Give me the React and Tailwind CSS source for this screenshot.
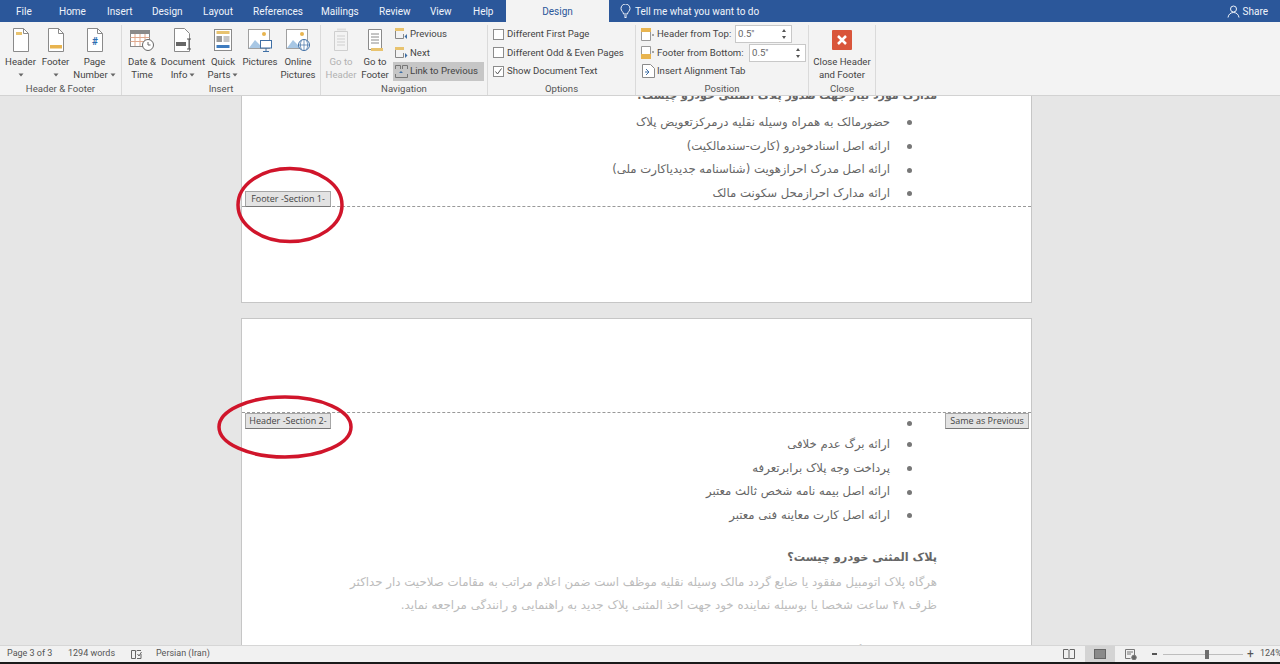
const tabs = [
  ['File', 'ml-[16px] w-[43px]'],
  ['Home', 'w-[48px]'],
  ['Insert', 'w-[45px]'],
  ['Design', 'w-[51px]'],
  ['Layout', 'w-[50px]'],
  ['References', 'w-[68px]'],
  ['Mailings', 'w-[58px]'],
  ['Review', 'w-[51px]'],
  ['View', 'w-[43px]'],
  ['Help', 'w-[33px]'],
];

const faPage1 = [
  'حضورمالک به همراه وسیله نقلیه درمرکزتعویض پلاک',
  'ارائه اصل اسنادخودرو (کارت-سندمالکیت)',
  'ارائه اصل مدرک احرازهویت (شناسنامه جدیدیاکارت ملی)',
  'ارائه مدارک احرازمحل سکونت مالک',
];

const faPage2 = [
  'ارائه برگ عدم خلافی',
  'پرداخت وجه پلاک برابرتعرفه',
  'ارائه اصل بیمه نامه شخص ثالث معتبر',
  'ارائه اصل کارت معاینه فنی معتبر',
];

function Sheet({ bar, children }) {
  return (
    <svg width="20" height="26" viewBox="0 0 20 26" fill="none">
      <path d="M2.5 1.5h10l5 5v18h-15z" fill="#fff" stroke="#8a8a8a" />
      <path d="M12.5 1.5v5h5" stroke="#8a8a8a" />
      {bar === 'top' && <rect x="5" y="5" width="6" height="3" fill="#e8c36f" />}
      {bar === 'bottom' && <rect x="4" y="18" width="12" height="3.5" fill="#e8b44f" />}
      {children}
    </svg>
  );
}

function Chevron() {
  return (
    <svg width="6" height="4" viewBox="0 0 6 4" className="inline-block align-middle">
      <path d="M0.5 0.5h5L3 3.5z" fill="#666" />
    </svg>
  );
}

function BigButton({ width, label, sub, chevron, dim, icon }) {
  return (
    <div className={`flex flex-col items-center ${width} ${dim ? 'text-[#b1b1b1]' : 'text-[#444]'}`}>
      <div className="h-[30px] shrink-0 flex items-center justify-center">{icon}</div>
      <div className="leading-[13px] whitespace-nowrap">{label}</div>
      <div className="leading-[13px] whitespace-nowrap">
        {sub}
        {chevron && <span className={sub ? 'ml-[2px]' : ''}><Chevron /></span>}
      </div>
    </div>
  );
}

function Group({ width, label, children, last }) {
  return (
    <div className={`flex flex-col shrink-0 h-full ${width} ${last ? '' : 'border-r border-[#dadada]'}`}>
      <div className="flex-1 flex min-h-0">{children}</div>
      <div className="h-[13px] leading-[13px] text-center text-[#555]">{label}</div>
    </div>
  );
}

function CheckRow({ checked, label }) {
  return (
    <div className="h-[18.5px] flex items-center gap-[3px] text-[#444] whitespace-nowrap">
      <span className="w-[11px] h-[11px] border border-[#8c8c8c] bg-white flex items-center justify-center">
        {checked && (
          <svg width="9" height="9" viewBox="0 0 9 9" fill="none">
            <path d="M1.5 4.5l2 2.5 4-5.5" stroke="#555" />
          </svg>
        )}
      </span>
      {label}
    </div>
  );
}

function Spinner({ width }) {
  return (
    <div className={`h-[18px] border border-[#c8c8c8] bg-white flex items-center justify-between pl-[2px] pr-[4px] text-[#666] ${width}`}>
      0.5"
      <svg width="6" height="12" viewBox="0 0 6 12">
        <path d="M3 1l2 3H1zM3 11L1 8h4z" fill="#555" />
      </svg>
    </div>
  );
}

function Tag({ className, children }) {
  return (
    <div className={`absolute h-[16px] bg-[#e3e3e3] border border-[#a6a6a6] border-b-[#777] text-[9px] leading-[14px] text-center text-[#444] whitespace-nowrap ${className}`}>
      {children}
    </div>
  );
}

function Bullets({ items, firstEmpty }) {
  return (
    <ul dir="rtl" className="pr-[119px] text-[#666] text-[11.7px]">
      {firstEmpty && (
        <li className="h-[20px] flex items-center"><span className="w-[5px] h-[5px] rounded-full bg-[#777]" /></li>
      )}
      {items.map((t) => (
        <li key={t} className="h-[23.7px] flex items-center gap-[17px] whitespace-nowrap">
          <span className="w-[5px] h-[5px] rounded-full bg-[#777] shrink-0" />
          {t}
        </li>
      ))}
    </ul>
  );
}

export default function App() {
  return (
    <div className="w-[1280px] h-[664px] overflow-hidden flex flex-col bg-[#e6e6e6] font-['Roboto','Noto_Sans',sans-serif] text-[10px]">
      {/* title tabs */}
      <div className="h-[22px] bg-[#2b579a] flex items-center text-[#f0f4fa] shrink-0">
        {tabs.map(([t, cls]) => (
          <div key={t} className={`whitespace-nowrap ${cls}`}>{t}</div>
        ))}
        <div className="mr-[11px] w-[103px] h-full bg-[#f3f3f3] text-[#2b579a] flex items-center justify-center">Design</div>
        <svg width="11" height="14" viewBox="0 0 11 14" fill="none" stroke="#f0f4fa">
          <path d="M3.5 10c0-2-2.5-3-2.500-5.500a4.500 4.500 0 019 0C10 7 7.500 8 7.500 10zM4 12h3M4.500 13.500h2" />
        </svg>
        <span className="ml-[4px]">Tell me what you want to do</span>
        <div className="ml-auto mr-[12px] flex items-center gap-[3px]">
          <svg width="13" height="13" viewBox="0 0 13 13" fill="none" stroke="#f0f4fa">
            <circle cx="6.500" cy="4" r="3" />
            <path d="M1 12.500c.5-3.500 3-5 5.500-5s5 1.500 5.500 5" />
          </svg>
          Share
        </div>
      </div>

      {/* ribbon */}
      <div className="h-[74px] bg-[#f3f3f3] border-b border-[#d2d2d2] flex pt-[3px] shrink-0 text-[9.6px]">
        <Group width="w-[122px]" label="Header & Footer">
          <div className="flex pl-[3px]">
            <BigButton width="w-[35px]" label="Header" chevron icon={<Sheet bar="top" />} />
            <BigButton width="w-[35px]" label="Footer" chevron icon={<Sheet bar="bottom" />} />
            <BigButton width="w-[43px]" label="Page" sub="Number" chevron icon={
              <Sheet><text x="10" y="18" textAnchor="middle" fontSize="10" fontWeight="700" fill="#2b6cb0">#</text></Sheet>
            } />
          </div>
        </Group>
        <Group width="w-[199px]" label="Insert">
          <div className="flex">
            <BigButton width="w-[40px]" label="Date &" sub="Time" icon={
              <svg width="26" height="25" viewBox="0 0 26 25" fill="none">
                <rect x="1.500" y="2.500" width="19" height="16" fill="#fff" stroke="#8a8a8a" />
                <rect x="1.500" y="2.500" width="19" height="3.500" fill="#8a8a8a" />
                <path d="M1.500 9.500h19M1.500 13.500h19M6 6v12M11 6v12M16 6v12" stroke="#e0a98e" />
                <circle cx="19" cy="17" r="5.500" fill="#fff" stroke="#666" />
                <path d="M19 14v3h2.500" stroke="#666" />
              </svg>
            } />
            <BigButton width="w-[42px]" label="Document" sub="Info" chevron icon={
              <svg width="22" height="26" viewBox="0 0 22 26" fill="none">
                <path d="M2.500 1.500h10l5 5v18h-15z" fill="#fff" stroke="#8a8a8a" />
                <rect x="4" y="15" width="10" height="4" fill="#666" />
                <path d="M15 12h4M17 12v10M15 22h4" stroke="#555" />
              </svg>
            } />
            <BigButton width="w-[38px]" label="Quick" sub="Parts" chevron icon={
              <svg width="20" height="24" viewBox="0 0 20 24" fill="none">
                <rect x="1.500" y="1.500" width="17" height="21" fill="#fff" stroke="#8a8a8a" />
                <rect x="3.500" y="3" width="13" height="3" fill="#e8c36f" />
                <rect x="3.500" y="8" width="5.500" height="6" fill="#9a9a9a" />
                <path d="M10.500 9h6M10.500 11h6M10.500 13h6" stroke="#8a8a8a" />
                <rect x="3.500" y="17" width="13" height="3" fill="#3f7cbf" />
              </svg>
            } />
            <BigButton width="w-[36px]" label="Pictures" icon={
              <svg width="26" height="25" viewBox="0 0 26 25" fill="none">
                <rect x="1.500" y="1.500" width="21" height="19" fill="#fff" stroke="#a0a0a0" />
                <circle cx="17" cy="6" r="2" fill="#e8b44f" />
                <path d="M2 20l6-8 5 5 3-2 3 5z" fill="#a8c7e4" />
                <rect x="13.500" y="12.500" width="11" height="7.500" fill="#fff" stroke="#3f6fa5" />
                <path d="M19 20v3M16 23.500h6" stroke="#3f6fa5" />
              </svg>
            } />
            <BigButton width="w-[40px]" label="Online" sub="Pictures" icon={
              <svg width="26" height="25" viewBox="0 0 26 25" fill="none">
                <rect x="1.500" y="1.500" width="21" height="19" fill="#fff" stroke="#a0a0a0" />
                <circle cx="17" cy="6" r="2" fill="#e8b44f" />
                <path d="M2 20l6-8 5 5 3-2 3 5z" fill="#a8c7e4" />
                <circle cx="19" cy="17" r="5.500" fill="#fff" stroke="#3f6fa5" />
                <path d="M13.500 17h11M19 11.500v11M16.500 12.500c-1.500 3-1.500 6 0 9M21.500 12.500c1.500 3 1.500 6 0 9" stroke="#3f6fa5" strokeWidth=".7" />
              </svg>
            } />
          </div>
        </Group>
        <Group width="w-[167px]" label="Navigation">
          <div className="flex pl-[3px]">
            <BigButton width="w-[34px]" dim label="Go to" sub="Header" icon={
              <svg width="20" height="25" viewBox="0 0 20 25" fill="none" stroke="#cfcfcf">
                <path d="M3.500 3.500h13v19h-13zM6 8h8M6 11h8M6 14h8M6 17h8" />
                <path d="M6 1.500h9" stroke="#dedede" strokeWidth="2" />
              </svg>
            } />
            <BigButton width="w-[34px]" label="Go to" sub="Footer" icon={
              <svg width="20" height="25" viewBox="0 0 20 25" fill="none" stroke="#8a8a8a">
                <path d="M3.500 1.500h13v20h-13z" fill="#fff" />
                <path d="M6 6h8M6 9h8M6 12h8M6 15h8" />
                <rect x="6" y="20" width="12" height="3" fill="#e8c36f" stroke="none" />
              </svg>
            } />
            <div className="ml-[1px] flex flex-col text-[#444] w-[91px] whitespace-nowrap">
              <div className="h-[18.5px] flex items-center gap-[2px] pl-[2px]">
                <svg width="13" height="12" viewBox="0 0 13 12" fill="none">
                  <rect x="0" y="0" width="9" height="3" fill="#e8c36f" />
                  <path d="M.5 3v7.500h8V6" stroke="#888" />
                  <path d="M12 6v5l-2.500-2.500z" fill="#3f6fa5" />
                </svg>
                Previous
              </div>
              <div className="h-[18.5px] flex items-center gap-[2px] pl-[2px]">
                <svg width="13" height="12" viewBox="0 0 13 12" fill="none">
                  <rect x="0" y="0" width="9" height="3" fill="#e8c36f" />
                  <path d="M.5 3v7.500h8V6" stroke="#888" />
                  <path d="M10 6v5l2.500-2.500z" fill="#3f6fa5" />
                </svg>
                Next
              </div>
              <div className="h-[18.5px] flex items-center gap-[2px] pl-[2px] bg-[#c6c6c6]">
                <svg width="13" height="13" viewBox="0 0 13 13" fill="none">
                  <path d="M.5 4V.5h5V4M7.500 4V.5h5V4" stroke="#777" />
                  <path d="M.5 9v3.500h12V9" stroke="#777" />
                  <path d="M4 8l2-2 2 2z" fill="#3f6fa5" />
                </svg>
                Link to Previous
              </div>
            </div>
          </div>
        </Group>
        <Group width="w-[148px]" label="Options">
          <div className="pl-[5px]">
            <CheckRow label="Different First Page" />
            <CheckRow label="Different Odd & Even Pages" />
            <CheckRow checked label="Show Document Text" />
          </div>
        </Group>
        <Group width="w-[173px]" label="Position">
          <div className="pl-[5px] text-[#444] whitespace-nowrap">
            <div className="h-[18.5px] flex items-center">
              <svg width="14" height="13" viewBox="0 0 14 13" fill="none" className="mr-[2px]">
                <path d="M.5 .5h9v12h-9z" fill="#fff" stroke="#999" />
                <rect x="0" y="0" width="10" height="4" fill="#e8b44f" />
                <path d="M12 6v2" stroke="#555" />
              </svg>
              <span className="w-[78px]">Header from Top:</span>
              <Spinner width="w-[57px]" />
            </div>
            <div className="h-[18.5px] flex items-center">
              <svg width="14" height="13" viewBox="0 0 14 13" fill="none" className="mr-[2px]">
                <path d="M.5 .5h9v12h-9z" fill="#fff" stroke="#999" />
                <rect x="0" y="8" width="10" height="5" fill="#e8b44f" />
                <path d="M12 5v2" stroke="#555" />
              </svg>
              <span className="w-[92px]">Footer from Bottom:</span>
              <Spinner width="w-[57px]" />
            </div>
            <div className="h-[18.5px] flex items-center">
              <svg width="13" height="14" viewBox="0 0 13 14" fill="none" className="mr-[2px] ml-[1px]">
                <path d="M.5 .5h8l4 4v9H.5z" fill="#fff" stroke="#8a8a8a" />
                <path d="M4 5l3 3-3 3M3 8h4" stroke="#3f6fa5" />
              </svg>
              Insert Alignment Tab
            </div>
          </div>
        </Group>
        <Group width="w-[67px]" label="Close">
          <BigButton width="w-[67px]" label="Close Header" sub="and Footer" icon={
            <svg width="20" height="20" viewBox="0 0 20 20" fill="none">
              <rect width="20" height="20" rx="1" fill="#d9553a" />
              <path d="M6 6l8 8M14 6l-8 8" stroke="#fff" strokeWidth="2.500" />
            </svg>
          } />
        </Group>
        <div className="flex-1" />
      </div>

      {/* document area */}
      <div className="relative flex-1 min-h-0 overflow-hidden pl-[241px] font-['DejaVu_Sans',sans-serif] text-[11px]">
        <div className="relative w-[791px] h-[207px] overflow-hidden bg-white border-x border-b border-[#c6c6c6]">
          <div dir="rtl" className="h-[14px] leading-[24px] -mt-[12px] mb-[13px] pr-[94px] font-bold text-[#666] whitespace-nowrap">
            مدارک مورد نیاز جهت صدور پلاک المثنی خودرو چیست؟
          </div>
          <Bullets items={faPage1} />
          <div className="border-b border-dashed border-[#999]" />
          <Tag className="left-[3px] top-[95px] w-[86px] font-['Open_Sans',sans-serif]">Footer -Section 1-</Tag>
        </div>

        <div className="relative mt-[15px] w-[791px] h-[400px] bg-white border border-[#c6c6c6]">
          <div className="h-[94px] border-b border-dashed border-[#999]" />
          <Bullets items={faPage2} firstEmpty />
          <div dir="rtl" className="mt-[18px] pr-[94px] leading-[24px] text-[11.3px] font-bold text-[#666] whitespace-nowrap">
            پلاک المثنی خودرو چیست؟
          </div>
          <div dir="rtl" className="pr-[94px] mt-[1px] leading-[23.500px] text-[11.8px] text-[#bcbcbc] whitespace-nowrap">
            <p>هرگاه پلاک اتومبیل مفقود یا ضایع گردد مالک وسیله نقلیه موظف است ضمن اعلام مراتب به مقامات صلاحیت دار حداکثر</p>
            <p>ظرف ۴۸ ساعت شخصا یا بوسیله نماینده خود جهت اخذ المثنی پلاک جدید به راهنمایی و رانندگی مراجعه نماید.</p>
          </div>
          <div dir="rtl" className="mt-[20px] pr-[94px] leading-[24px] font-bold text-[#888] whitespace-nowrap">
            نحوه صدور پلاک المثنی خودرو
          </div>
          <Tag className="left-[3px] top-[94px] w-[86px] font-['Open_Sans',sans-serif]">Header -Section 2-</Tag>
          <Tag className="left-[703px] top-[94px] w-[84px] font-['Open_Sans',sans-serif]">Same as Previous</Tag>
        </div>

        {/* red circles drawn over the page */}
        <svg className="absolute left-[235px] top-[70px]" width="110" height="78" viewBox="0 0 110 78" fill="none">
          <ellipse cx="55" cy="39" rx="52" ry="36.500" stroke="#d0152b" strokeWidth="3.500" />
        </svg>
        <svg className="absolute left-[216px] top-[299px]" width="138" height="64" viewBox="0 0 138 64" fill="none">
          <ellipse cx="69" cy="32" rx="66" ry="30" stroke="#d0152b" strokeWidth="3.500" />
        </svg>
      </div>

      {/* status bar */}
      <div className="h-[17px] bg-[#f1f1f1] border-t border-[#d6d6d6] flex items-center text-[#555] text-[9px] shrink-0 whitespace-nowrap">
        <span className="ml-[7px] w-[61px]">Page 3 of 3</span>
        <span className="w-[63px]">1294 words</span>
        <svg width="11" height="11" viewBox="0 0 11 11" fill="none" stroke="#666">
          <path d="M.5 1.500h4v8h-4zM5 2.500l1-1h4M10 5v4.500H6" />
          <path d="M6.500 5l1.500 2 2.500-4" />
        </svg>
        <span className="ml-[14px]">Persian (Iran)</span>
        <div className="ml-auto flex items-center h-full">
          <svg width="12" height="10" viewBox="0 0 12 10" fill="none" stroke="#666">
            <path d="M.5 .5h4.500l1 1 1-1h4.500v9H7l-1 .5-1-.5H.5zM6 1.500V9.500" />
          </svg>
          <div className="ml-[10px] w-[30px] h-full bg-[#d4d4d4] flex items-center justify-center">
            <svg width="12" height="10" viewBox="0 0 12 10" fill="#8a8a8a" stroke="#666">
              <rect x=".5" y=".5" width="11" height="9" />
            </svg>
          </div>
          <svg className="ml-[10px]" width="12" height="11" viewBox="0 0 12 11" fill="none" stroke="#777">
            <path d="M.5 .5h9v6M.5 .5v9h5M2 3h6M2 5h4" />
            <circle cx="9" cy="8.500" r="2.300" fill="#666" />
          </svg>
          <span className="ml-[15px] w-[5px] h-[1.500px] bg-[#555]" />
          <div className="relative ml-[6px] w-[80px] h-[1px] bg-[#bdbdbd]">
            <span className="absolute left-[42px] -top-[4px] w-[4px] h-[9px] bg-[#6e6e6e]" />
          </div>
          <span className="ml-[4px] w-[9px] text-[12px] leading-none">+</span>
          <span className="ml-[4px] w-[20px]">124%</span>
        </div>
      </div>
      <div className="h-[2px] bg-[#1a1a1a] shrink-0" />
    </div>
  );
}
